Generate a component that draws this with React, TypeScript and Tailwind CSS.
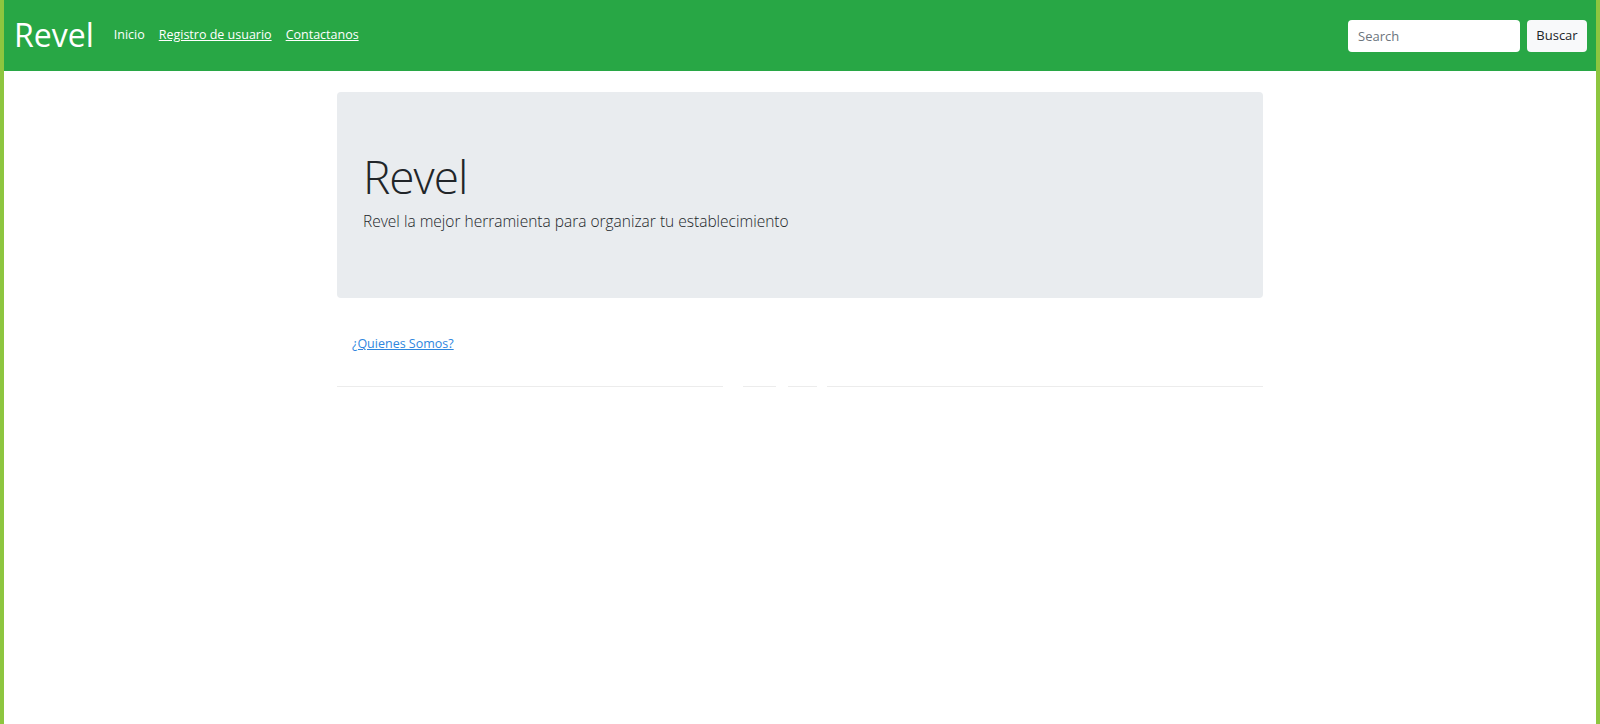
import { useState } from 'react'

export default function App() {
  const [query, setQuery] = useState('')

  return (
    <div className="min-h-[724px] bg-white border-x-4 border-[#8dc63f] font-['Open_Sans',sans-serif] text-[#212529]">
      {/* Navbar */}
      <nav className="h-[71px] bg-[#28a745] flex items-center justify-between pl-[10px] pr-[9px]">
        <div className="flex items-center">
          <a href="#" className="text-white text-[32px] leading-none mr-[20px] pb-[2px]">Revel</a>
          <ul className="flex items-center gap-[14px] text-[12.5px] text-white">
            <li><a href="#">Inicio</a></li>
            <li><a href="#" className="underline">Registro de usuario</a></li>
            <li><a href="#" className="underline">Contactanos</a></li>
          </ul>
        </div>
        <form className="flex items-center gap-[7px]" onSubmit={e => e.preventDefault()}>
          <input
            value={query}
            onChange={e => setQuery(e.target.value)}
            placeholder="Search"
            className="w-[172px] h-[32px] rounded-[4px] bg-white px-[10px] text-[13px] placeholder:text-[#6c757d] outline-none"
          />
          <button className="w-[60px] h-[32px] rounded-[4px] bg-[#f8f9fa] text-[13px] text-[#212529]">Buscar</button>
        </form>
      </nav>

      <div className="w-[926px] mx-auto pt-[21px]">
        {/* Jumbotron */}
        <div className="h-[206px] bg-[#e9ecef] rounded-[4px] pl-[26px] pt-[57px]">
          <h1 className="text-[46px] font-light leading-[1.2] tracking-[-1px]">Revel</h1>
          <p className="text-[15.5px] font-light leading-[1.5] mt-[6px]">Revel la mejor herramienta para organizar tu establecimiento</p>
        </div>

        <div className="pt-[32px] pl-[15px]">
          <a href="#" className="text-[12.5px] text-[#2e86de] underline">¿Quienes Somos?</a>
        </div>

        {/* hr roto */}
        <div className="flex mt-[32px] h-px">
          <div className="w-[386px] bg-[#ececec]" />
          <div className="w-[20px]" />
          <div className="w-[33px] bg-[#ececec]" />
          <div className="w-[12px]" />
          <div className="w-[29px] bg-[#ececec]" />
          <div className="w-[10px]" />
          <div className="flex-1 bg-[#ececec]" />
        </div>
      </div>
    </div>
  )
}
